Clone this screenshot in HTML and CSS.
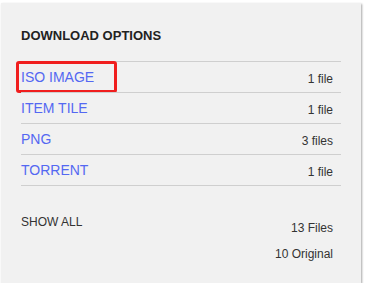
FILE: index.html
```html
<!DOCTYPE html>
<html lang="en">
<head>
    <meta charset="UTF-8">
    <meta name="viewport" content="width=device-width, initial-scale=1.0">
    <title>Download Options</title>
    <link rel="stylesheet" href="styles.css">
</head>
<body>
    <div class="download-card">
        <h2 class="card-title">DOWNLOAD OPTIONS</h2>

        <div class="format-list">
            <div class="format-row highlighted">
                <a href="#" class="format-link">ISO IMAGE</a>
                <span class="format-count">1 file</span>
                <span class="highlight-box"></span>
            </div>
            <div class="format-row">
                <a href="#" class="format-link">ITEM TILE</a>
                <span class="format-count">1 file</span>
            </div>
            <div class="format-row">
                <a href="#" class="format-link">PNG</a>
                <span class="format-count">3 files</span>
            </div>
            <div class="format-row">
                <a href="#" class="format-link">TORRENT</a>
                <span class="format-count">1 file</span>
            </div>
        </div>

        <div class="card-footer">
            <a href="#" class="show-all">SHOW ALL</a>
            <div class="totals">
                <span>13 Files</span>
                <span>10 Original</span>
            </div>
        </div>
    </div>
</body>
</html>
```

FILE: styles.css
```css
body {
    font-family: "Liberation Sans", Arial, sans-serif;
    margin: 0;
    padding: 3px 0 0 1px;
    background-color: #fff;
    color: #333;
}

.download-card {
    width: 360px;
    height: 280px;
    box-sizing: border-box;
    padding: 25px 20px 0 20px;
    background-color: #f1f1f1;
    box-shadow: 1px 1px 2px rgba(0, 0, 0, 0.35);
}

.card-title {
    margin: 0 0 18px 0;
    font-size: 13px;
    line-height: 15px;
    font-weight: bold;
    color: #222;
}

.format-list {
    border-bottom: 1px solid #cfcfcf;
}

.format-row {
    position: relative;
    display: flex;
    justify-content: space-between;
    align-items: flex-end;
    height: 31px;
    box-sizing: border-box;
    padding-bottom: 6px;
    border-top: 1px solid #cfcfcf;
}

.format-link {
    font-size: 14px;
    line-height: 16px;
    margin-bottom: 1px;
    color: #5468f2;
    text-decoration: none;
}

.format-count {
    font-size: 12px;
    line-height: 14px;
    margin-right: 8px;
    color: #333;
}

.highlight-box {
    position: absolute;
    left: -5px;
    top: -1px;
    width: 101px;
    height: 32px;
    box-sizing: border-box;
    border: 3px solid #f01e1e;
    border-radius: 3px;
}

.card-footer {
    display: flex;
    justify-content: space-between;
    align-items: flex-start;
    padding-top: 29px;
    font-size: 12px;
    line-height: 14px;
}

.show-all {
    color: #333;
    text-decoration: none;
}

.totals {
    display: flex;
    flex-direction: column;
    align-items: flex-end;
    gap: 12px;
    margin-top: 6px;
    margin-right: 8px;
}
```
